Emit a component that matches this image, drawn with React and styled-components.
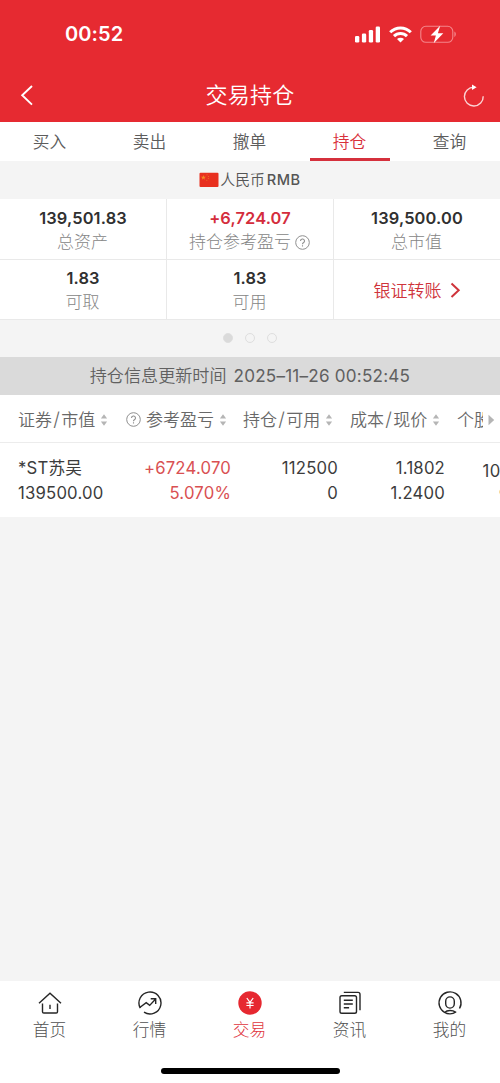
import React from 'react';
import styled, { createGlobalStyle } from 'styled-components';

const GlobalStyle = createGlobalStyle`
  * {
    box-sizing: border-box;
  }

  body {
    margin: 0;
    background: #f4f4f4;
    font-family: Inter, "Noto Sans CJK SC", sans-serif;
    font-weight: 350;
    color: #333;
  }
`;

const Page = styled.div`
  width: 500px;
  height: 1083px;
  display: flex;
  flex-direction: column;
  overflow: hidden;
  background: #f4f4f4;
`;

const Header = styled.header`
  height: 122px;
  flex: none;
  background: #e62a31;
  color: #fff;
`;

const StatusBar = styled.div`
  height: 68px;
  padding: 0 43px 0 65px;
  display: flex;
  align-items: center;
  justify-content: space-between;
`;

const Clock = styled.span`
  font-size: 20px;
  font-weight: 600;
  letter-spacing: 0.1px;
`;

const StatusIcons = styled.div`
  display: flex;
  align-items: center;
  gap: 8.5px;
`;

const NavBar = styled.div`
  height: 54px;
  padding: 0 15px 0 20px;
  display: grid;
  grid-template-columns: 22px 1fr 22px;
  align-items: center;
`;

const Title = styled.h1`
  margin: 0;
  padding-right: 5px;
  font-size: 22px;
  font-weight: 350;
  letter-spacing: 0.3px;
  line-height: 54px;
  text-align: center;
`;

const Tabs = styled.nav`
  height: 39px;
  flex: none;
  display: grid;
  grid-template-columns: repeat(5, 1fr);
  justify-items: center;
  background: #fff;
`;

const Tab = styled.div`
  width: 80px;
  height: 39px;
  padding: 1px 1px 0 0;
  line-height: 38px;
  font-size: 16.7px;
  text-align: center;
  color: ${({ $active }) => ($active ? '#d9303a' : '#5c5c5c')};
  border-bottom: 3px solid ${({ $active }) => ($active ? '#d5303c' : 'transparent')};
`;

const Currency = styled.div`
  height: 38px;
  flex: none;
  display: flex;
  align-items: center;
  justify-content: center;
  gap: 1px;
  font-size: 14.8px;
  line-height: 36px;
  color: #555;
`;

const Code = styled.span`
  padding-left: 1px;
  font-size: 14.6px;
  font-weight: 500;
  letter-spacing: 0.5px;
`;

const Summary = styled.section`
  flex: none;
  display: grid;
  grid-template-columns: 167px 167px 166px;
  grid-template-rows: 61px 60px;
  background: #fff;
`;

const Cell = styled.div`
  display: flex;
  flex-direction: column;
  align-items: center;
  padding-top: ${({ $first }) => ($first ? 7 : 6)}px;
  border-right: ${({ $last }) => ($last ? 0 : 1)}px solid #e9e9e9;
  border-bottom: 1px solid #e9e9e9;
`;

const Amount = styled.div`
  height: 24px;
  line-height: 24px;
  font-size: 16.4px;
  font-weight: 600;
  letter-spacing: 0.15px;
  color: ${({ $up }) => ($up ? '#d42c3c' : '#303030')};
`;

const Label = styled.div`
  height: 24px;
  padding-right: 1px;
  display: flex;
  align-items: center;
  gap: 4px;
  font-size: 17px;
  font-weight: 300;
  line-height: 24px;
  color: #858585;
`;

const Transfer = styled.div`
  display: flex;
  align-items: center;
  justify-content: center;
  gap: 8px;
  font-size: 17px;
  color: #cf343b;
  border-bottom: 1px solid #e9e9e9;
`;

const Dots = styled.div`
  height: 37px;
  flex: none;
  padding-bottom: 1px;
  display: flex;
  align-items: center;
  justify-content: center;
  gap: 12px;
`;

const Dot = styled.span`
  width: 10px;
  height: 10px;
  border-radius: 50%;
  border: 1.5px solid #dedede;
  background: ${({ $on }) => ($on ? '#dadada' : 'transparent')};
`;

const UpdateBar = styled.div`
  height: 38px;
  flex: none;
  display: flex;
  justify-content: center;
  gap: 7px;
  line-height: 38px;
  font-size: 17.1px;
  color: #606060;
  background: #dadada;
`;

const UpdateTime = styled.span`
  font-weight: 400;
  letter-spacing: 0.22px;
`;

const columns = '108px 117px 107px 107px 1fr';

const TableHead = styled.div`
  height: 48px;
  flex: none;
  padding: 2px 0 0 18px;
  display: grid;
  grid-template-columns: ${columns};
  align-items: center;
  background: #fff;
  border-bottom: 1px solid #ececec;
`;

const HeadCell = styled.div`
  display: flex;
  align-items: center;
  gap: 5px;
  font-size: 17px;
  line-height: 24px;
  white-space: nowrap;
  color: #686868;
`;

const Slash = styled.span`
  padding: 0 1.3px;
  font-size: 19px;
  line-height: 1;
`;

const ClippedText = styled.span`
  width: 26px;
  overflow: hidden;
`;

const HoldingRow = styled.div`
  height: 74px;
  flex: none;
  padding: 13px 0 0 18px;
  display: grid;
  grid-template-columns: 106px 107px 107px 107px 37px 1fr;
  background: #fff;
  overflow: hidden;
`;

const Value = styled.div`
  font-size: 16.7px;
  font-weight: 400;
  line-height: 25px;
  letter-spacing: 0.2px;
  white-space: nowrap;
  text-align: ${({ $left }) => ($left ? 'left' : 'right')};
  color: ${({ $up }) => ($up ? '#d95052' : '#3c3c3c')};
`;

const Ratio = styled(Value)`
  grid-column: 6;
  width: 48px;
  margin-left: 0.5px;
  padding-top: 3px;
  letter-spacing: 0.4px;
  text-align: center;
`;

const Empty = styled.div`
  flex: 1;
`;

const BottomBar = styled.footer`
  height: 102px;
  flex: none;
  background: #fff;
`;

const BottomTabs = styled.div`
  height: 87px;
  padding-top: 9px;
  display: grid;
  grid-template-columns: repeat(5, 1fr);
`;

const BottomTab = styled.div`
  display: flex;
  flex-direction: column;
  align-items: center;
  font-size: 16.7px;
  font-weight: 300;
  line-height: 28px;
  color: ${({ $active }) => ($active ? '#e0353d' : '#505050')};
`;

const BottomLabel = styled.span`
  padding-right: 1px;
`;

const HomeIndicator = styled.div`
  width: 179px;
  height: 6px;
  margin: 0 auto;
  border-radius: 3px;
  background: #000;
`;

const SignalIcon = () => (
  <svg width="25" height="17" viewBox="0 0 25 17" fill="#fff">
    <rect x="0" y="10" width="4.3" height="6.5" rx="1.3" />
    <rect x="6.9" y="7.5" width="4.3" height="9" rx="1.3" />
    <rect x="13.8" y="4" width="4.3" height="12.5" rx="1.3" />
    <rect x="20.7" y="0.5" width="4.3" height="16" rx="1.3" />
  </svg>
);

const WifiIcon = () => (
  <svg width="23" height="17" viewBox="0 0 23 17" fill="none" stroke="#fff" strokeWidth="3">
    <path d="M1.2 6.2a14.6 14.6 0 0 1 20.6 0" />
    <path d="M5 10.1a9.2 9.2 0 0 1 13 0" />
    <path d="M11.5 16.6 8 13.1a5 5 0 0 1 7 0Z" fill="#fff" stroke="none" />
  </svg>
);

const BatteryIcon = () => (
  <svg width="37" height="19" viewBox="0 0 37 19">
    <rect x="0.8" y="1.3" width="32" height="16" rx="5" fill="none" stroke="#f4858a" strokeWidth="1.1" />
    <path d="M34.4 6.6c1.9.7 1.9 4.7 0 5.4Z" fill="#f4858a" />
    <path d="M20.2.8 10.6 10.6h5.3l-2.2 7.7 9.6-10h-5.4Z" fill="#fff" />
  </svg>
);

const BackIcon = () => (
  <svg width="16" height="22" viewBox="0 0 16 22" fill="none" stroke="#fff" strokeWidth="1.9">
    <path d="M12 2 2.2 11.3 12 20.6" />
  </svg>
);

const RefreshIcon = () => (
  <svg width="22" height="26" viewBox="0 0 22 26">
    <path d="M20.2 14.2a9.4 9.4 0 1 1-9.2-9" fill="none" stroke="#fbd3d4" strokeWidth="1.4" />
    <path d="M9 2.5 13.6 5.2 9 8Z" fill="#fff" />
  </svg>
);

const FlagIcon = () => (
  <svg width="20" height="16" viewBox="0 0 20 16">
    <rect x="0.5" y="0.7" width="19" height="14.4" rx="1" fill="#e8301f" />
    <path d="m4.4 3 .6 1.8h1.9L5.4 5.9 6 7.7 4.4 6.6 2.8 7.7l.6-1.8-1.5-1.1h1.9Z" fill="#f38a24" />
    <g fill="#ee7b22">
      <circle cx="8" cy="2.8" r="0.5" />
      <circle cx="9.4" cy="4.4" r="0.5" />
      <circle cx="9.3" cy="6.6" r="0.5" />
      <circle cx="7.8" cy="8.2" r="0.5" />
    </g>
  </svg>
);

const HelpIcon = () => (
  <svg width="15" height="15" viewBox="0 0 15 15" fill="none" stroke="#8f8f8f">
    <circle cx="7.5" cy="7.5" r="6.8" />
    <path d="M5.5 6a2 2 0 1 1 2.9 1.8c-.7.4-.9.7-.9 1.4M7.5 10.3v1.1" strokeWidth="1.1" />
  </svg>
);

const ArrowIcon = () => (
  <svg width="11" height="16" viewBox="0 0 11 16" fill="none" stroke="#cf343b" strokeWidth="2">
    <path d="m1.5 1.5 7.2 6.7-7.2 6.7" />
  </svg>
);

const SortIcon = () => (
  <svg width="8" height="12" viewBox="0 0 8 12" fill="#b5b5b5">
    <path d="M4 .2 7.1 4.6H.9ZM4 11.8.9 7.4h6.2Z" />
  </svg>
);

const MoreIcon = () => (
  <svg width="7" height="12" viewBox="0 0 7 12">
    <path d="M.5.7 6.2 6 .5 11.3Z" fill="#b5b5b5" />
  </svg>
);

const lineIcon = {
  width: 26,
  height: 26,
  viewBox: '0 0 26 26',
  fill: 'none',
  stroke: '#262626',
  strokeWidth: 1.4,
};

const HomeIcon = () => (
  <svg {...lineIcon}>
    <path d="M2 13.3 13 3.2l11 10.1M5.5 13.4v8.3c0 .8.5 1.3 1.3 1.3h12.4c.8 0 1.3-.5 1.3-1.3v-8.3M13 14.8V19" />
  </svg>
);

const MarketIcon = () => (
  <svg {...lineIcon}>
    <path d="M3.3 18.2A11 11 0 1 1 7 22.2" />
    <path d="m2.8 17.5 6.4-4.9 3.5 2.8 5.7-6.2M13.7 8.7h5v5.2" />
  </svg>
);

const TradeIcon = () => (
  <svg width="26" height="26" viewBox="0 0 26 26">
    <circle cx="13" cy="13" r="11.7" fill="#e62830" />
    <path d="m9.8 8 3.2 4.4L16.2 8M13 12.4v6M9.4 12.8h7.2M9.4 15.5h7.2" fill="none" stroke="#fff" strokeWidth="1.2" />
  </svg>
);

const NewsIcon = () => (
  <svg {...lineIcon}>
    <rect x="3" y="5.7" width="16.5" height="17.6" rx="1.8" />
    <path d="M6.8 2.4H21c1.3 0 2 .7 2 2v15.8M6.8 10.3h9M6.8 14h9M6.8 17.7h5.3" />
  </svg>
);

const MineIcon = () => (
  <svg {...lineIcon}>
    <path d="M7.7 22.5a11 11 0 1 1 14.8-4" />
    <rect x="8.7" y="6.9" width="8.6" height="11.2" rx="4.3" />
    <path d="M7.7 22.4c1.2-1.3 3.2-1.9 5.3-1.9s4.1.5 5.5 1.6c-3 2.2-7.8 2.3-10.8.3Z" />
  </svg>
);

const tabs = ['买入', '卖出', '撤单', '持仓', '查询'];

const summary = [
  { amount: '139,501.83', label: '总资产' },
  { amount: '+6,724.07', label: '持仓参考盈亏', up: true, help: true },
  { amount: '139,500.00', label: '总市值' },
  { amount: '1.83', label: '可取' },
  { amount: '1.83', label: '可用' },
];

const heads = [['证券', '市值'], ['参考盈亏'], ['持仓', '可用'], ['成本', '现价']];

const bottomTabs = [
  { label: '首页', Icon: HomeIcon },
  { label: '行情', Icon: MarketIcon },
  { label: '交易', Icon: TradeIcon, active: true },
  { label: '资讯', Icon: NewsIcon },
  { label: '我的', Icon: MineIcon },
];

function App() {
  return (
    <>
      <GlobalStyle />
      <Page>
        <Header>
          <StatusBar>
            <Clock>00:52</Clock>
            <StatusIcons>
              <SignalIcon />
              <WifiIcon />
              <BatteryIcon />
            </StatusIcons>
          </StatusBar>
          <NavBar>
            <BackIcon />
            <Title>交易持仓</Title>
            <RefreshIcon />
          </NavBar>
        </Header>

        <Tabs>
          {tabs.map((tab) => (
            <Tab key={tab} $active={tab === '持仓'}>{tab}</Tab>
          ))}
        </Tabs>

        <Currency>
          <FlagIcon />
          <span>人民币</span>
          <Code>RMB</Code>
        </Currency>

        <Summary>
          {summary.map((item, i) => (
            <Cell key={item.label} $first={i < 3} $last={i === 2}>
              <Amount $up={item.up}>{item.amount}</Amount>
              <Label>
                {item.label}
                {item.help && <HelpIcon />}
              </Label>
            </Cell>
          ))}
          <Transfer>
            银证转账
            <ArrowIcon />
          </Transfer>
        </Summary>

        <Dots>
          <Dot $on />
          <Dot />
          <Dot />
        </Dots>

        <UpdateBar>
          <span>持仓信息更新时间</span>
          <UpdateTime>2025–11–26 00:52:45</UpdateTime>
        </UpdateBar>

        <TableHead>
          {heads.map(([first, second]) => (
            <HeadCell key={first}>
              {!second && <HelpIcon />}
              <span>
                {first}
                {second && <Slash>/</Slash>}
                {second}
              </span>
              <SortIcon />
            </HeadCell>
          ))}
          <HeadCell>
            <ClippedText>个股仓位</ClippedText>
            <MoreIcon />
          </HeadCell>
        </TableHead>

        <HoldingRow>
          <Value $left>*ST苏吴<br />139500.00</Value>
          <Value $up>+6724.070<br />5.070%</Value>
          <Value>112500<br />0</Value>
          <Value>1.1802<br />1.2400</Value>
          <Ratio>100.00<br />%</Ratio>
        </HoldingRow>

        <Empty />

        <BottomBar>
          <BottomTabs>
            {bottomTabs.map(({ label, Icon, active }) => (
              <BottomTab key={label} $active={active}>
                <Icon />
                <BottomLabel>{label}</BottomLabel>
              </BottomTab>
            ))}
          </BottomTabs>
          <HomeIndicator />
        </BottomBar>
      </Page>
    </>
  );
}

export default App;
